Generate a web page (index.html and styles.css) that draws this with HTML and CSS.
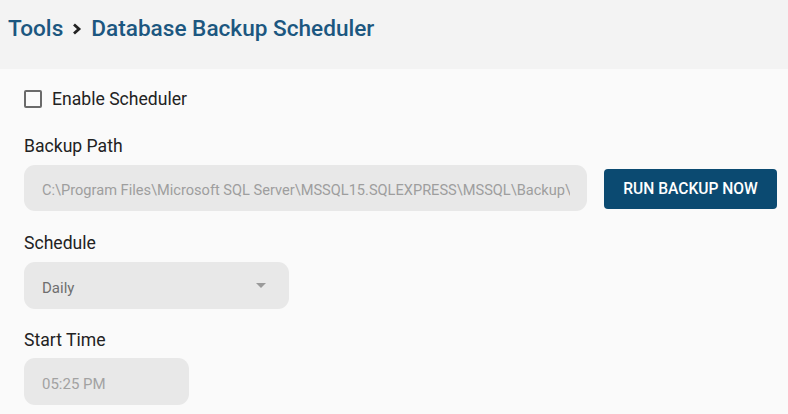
FILE: index.html
```html
<!DOCTYPE html>
<html>
<head>
<meta charset="utf-8">
<link rel="stylesheet" href="styles.css">
</head>
<body>
<header class="header">
  <h1 class="crumbs">
    <span>Tools</span>
    <svg class="chev" viewBox="0 0 10 12" width="10" height="12"><polyline points="2,1.5 7,6 2,10.5" fill="none" stroke="#222" stroke-width="2.8"/></svg>
    <span>Database Backup Scheduler</span>
  </h1>
</header>
<main class="content">
  <label class="check-row">
    <span class="box"></span>
    <span class="check-label">Enable Scheduler</span>
  </label>

  <div class="field-label first">Backup Path</div>
  <div class="path-row">
    <div class="input path-input"><span class="path-text">C:\Program Files\Microsoft SQL Server\MSSQL15.SQLEXPRESS\MSSQL\Backup\</span></div>
    <button class="btn">RUN BACKUP NOW</button>
  </div>

  <div class="field-label">Schedule</div>
  <div class="input select">
    <span class="select-text">Daily</span>
    <span class="arrow"></span>
  </div>

  <div class="field-label last">Start Time</div>
  <div class="input time"><span class="time-text">05:25 PM</span></div>
</main>
</body>
</html>
```
FILE: styles.css
```css
html, body {
  margin: 0;
  padding: 0;
  background: #fafafa;
  font-family: Roboto, "Liberation Sans", sans-serif;
  color: #212121;
}
.header {
  height: 69px;
  background: #f3f3f3;
  box-sizing: border-box;
  padding: 12px 0 0 8px;
}
.crumbs {
  margin: 0;
  display: flex;
  align-items: center;
  font-size: 22.6px;
  font-weight: 500;
  color: #1c5780;
  height: 32px;
}
.chev {
  margin: 2px 9px 0 9px;
}
.content {
  padding: 20px 0 0 24px;
}
.check-row {
  display: flex;
  align-items: center;
  height: 20px;
}
.box {
  width: 14px;
  height: 14px;
  border: 2px solid #6a6a6a;
  border-radius: 2px;
  margin-right: 10px;
}
.check-label {
  font-size: 17.6px;
  color: #222;
}
.field-label {
  font-size: 17.6px;
  color: #222;
  height: 20px;
  line-height: 20px;
  margin-top: 22px;
  margin-bottom: 9px;
}
.field-label.first {
  margin-top: 27px;
}
.field-label.last {
  margin-top: 21px;
  margin-bottom: 8px;
}
.input {
  background: #e8e8e8;
  border-radius: 11px;
  height: 47px;
  box-sizing: border-box;
  display: flex;
  align-items: center;
  padding: 4px 16px 0 18px;
  font-size: 15px;
  flex-shrink: 0;
}
.path-row {
  display: flex;
  align-items: center;
}
.path-input {
  width: 563px;
  height: 46px;
  overflow: hidden;
  font-size: 14.6px;
}
.path-text {
  color: #9e9e9e;
  white-space: nowrap;
  overflow: hidden;
  display: block;
  width: 528px;
}
.btn {
  flex-shrink: 0;
  margin-left: 17px;
  width: 173px;
  height: 40px;
  background: #0b4a71;
  color: #fff;
  border: none;
  border-radius: 4px;
  font-family: Roboto, "Liberation Sans", sans-serif;
  font-weight: 500;
  font-size: 15.6px;
  padding: 0;
  margin-top: 2px;
}
.select {
  width: 265px;
  justify-content: space-between;
}
.select-text {
  color: #6f6f6f;
}
.arrow {
  width: 0;
  height: 0;
  border-left: 5px solid transparent;
  border-right: 5px solid transparent;
  border-top: 5px solid #9a9a9a;
  margin-right: 7px;
  margin-top: -4px;
}
.time {
  width: 165px;
}
.time-text {
  color: #a2a2a2;
}
```
